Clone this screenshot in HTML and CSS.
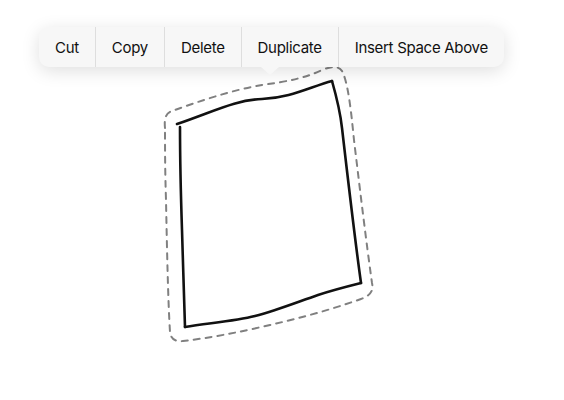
FILE: index.html
```html
<!DOCTYPE html>
<html lang="en">
<head>
    <meta charset="UTF-8">
    <meta name="viewport" content="width=device-width, initial-scale=1.0">
    <title>Sketch selection</title>
    <link rel="stylesheet" href="styles.css">
</head>
<body>
    <div class="canvas">
        <svg class="drawing" width="564" height="400" viewBox="0 0 564 400">
            <!-- selection outline -->
            <path class="lasso" d="M165 128 C164 118 166 113 172 111 C200 101 232 90 262 85 C290 81 305 78 322 70 C332 66 339 66 342 71 C348 82 351 110 354 140 C360 190 366 240 372 283 C374 292 369 296 361 299 C330 310 300 318 270 325 C240 332 210 338 183 341 C175 342 171 339 170 332 C168 300 167 250 166 200 C165 170 165 145 165 128 Z"/>
            <!-- stroke -->
            <path class="ink" d="M177 124 C215 111 235 100 262 99 C290 98 310 87 332 81"/>
            <path class="ink" d="M332 81 C336 95 340 110 342 128 C348 180 355 240 361 283"/>
            <path class="ink" d="M361 283 C345 287 330 291 318 295 C295 303 275 311 255 316 C235 321 210 323 185 327"/>
            <path class="ink" d="M185 327 C184 300 183 260 182 230 C181 200 180 160 180 127"/>
        </svg>

        <div class="menu">
            <div class="menu-item">Cut</div>
            <div class="menu-item">Copy</div>
            <div class="menu-item">Delete</div>
            <div class="menu-item">Duplicate</div>
            <div class="menu-item">Insert Space Above</div>
            <div class="menu-arrow"></div>
        </div>
    </div>
</body>
</html>
```

FILE: styles.css
```css
body {
    margin: 0;
    background-color: white;
    font-family: Inter, "Liberation Sans", sans-serif;
    color: #111;
    overflow: hidden;
}
.canvas {
    position: relative;
    width: 564px;
    height: 400px;
}
.drawing {
    display: block;
}
.lasso {
    fill: none;
    stroke: #808080;
    stroke-width: 2;
    stroke-dasharray: 6 6;
    stroke-linecap: round;
}
.ink {
    fill: none;
    stroke: #111;
    stroke-width: 2.6;
    stroke-linecap: round;
    stroke-linejoin: round;
}

.menu {
    position: absolute;
    left: 39px;
    top: 27px;
    height: 40px;
    display: flex;
    background-color: #f7f7f7;
    border-radius: 10px;
    box-shadow: 0 4px 18px rgba(0, 0, 0, 0.13);
}
.menu-item {
    display: flex;
    align-items: center;
    padding: 0 16px;
    font-size: 15px;
    letter-spacing: -0.3px;
    border-left: 1px solid #dedede;
}
.menu-item:first-child {
    border-left: none;
}
.menu-arrow {
    position: absolute;
    left: 222px;
    top: 40px;
    width: 0;
    height: 0;
    border-left: 9px solid transparent;
    border-right: 9px solid transparent;
    border-top: 8px solid #f7f7f7;
}
```
